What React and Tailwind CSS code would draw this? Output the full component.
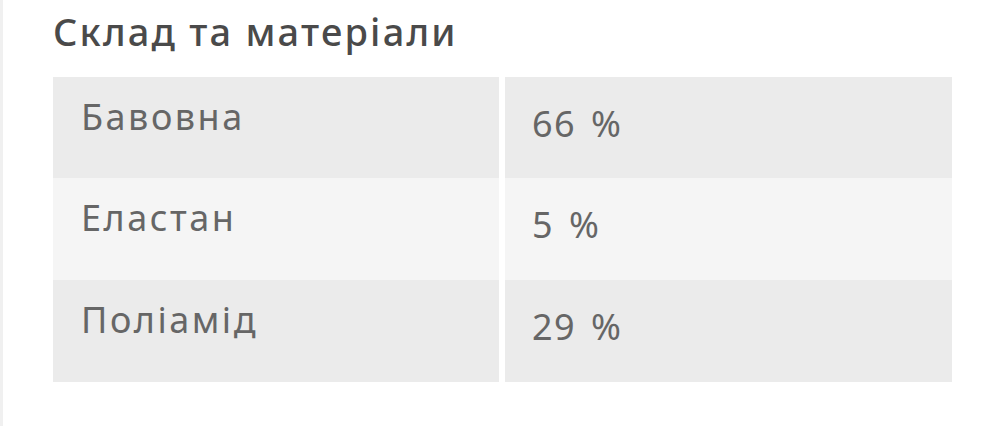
import React from 'react';

// Composition table for a product card
const rows = [
  { name: 'Бавовна', value: '66 %', bg: 'bg-[#ebebeb]' },
  { name: 'Еластан', value: '5 %', bg: 'bg-[#f5f5f5]' },
  { name: 'Поліамід', value: '29 %', bg: 'bg-[#ebebeb]' },
];

function App() {
  return (
    <div className="w-[1000px] h-[426px] bg-white border-l-[3px] border-[#f0f0f0] pl-[50px] pr-[48px] pt-[7px] font-['Noto_Sans',sans-serif] text-[#666666]">
      <h2 className="text-[38px] leading-[48px] font-medium text-[#4a4a4a] tracking-[2.2px]">
        Склад та матеріали
      </h2>
      <div className="mt-[22px] flex flex-col">
        {rows.map((row, i) => (
          <div key={row.name} className={`grid grid-cols-[446px_447px] gap-x-[6px] ${i === 0 ? 'h-[101px]' : 'h-[102px]'}`}>
            <div className={`${row.bg} pl-[28px] pt-[22px] text-[36px] leading-[36px] tracking-[2.5px]`}>{row.name}</div>
            <div className={`${row.bg} pl-[27px] pt-[29px] text-[36px] leading-[36px] tracking-[1.5px] [word-spacing:4px]`}>{row.value}</div>
          </div>
        ))}
      </div>
    </div>
  );
}

export default App;
